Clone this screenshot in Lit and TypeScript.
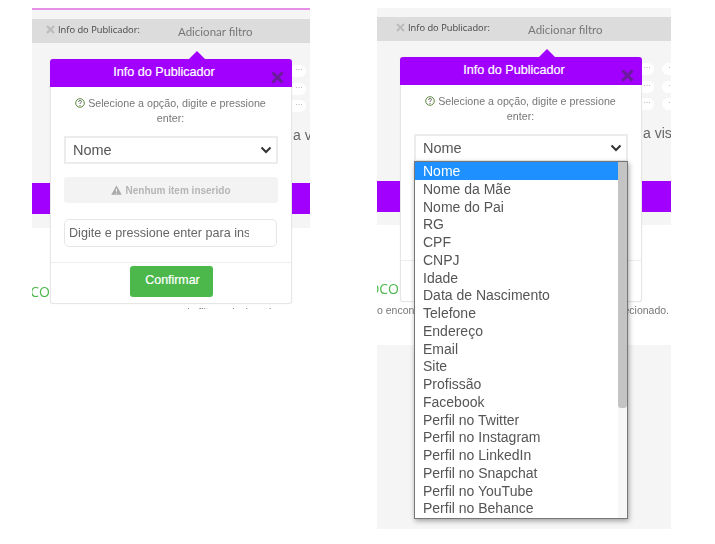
import { LitElement, html, css } from "lit";
import { customElement } from "lit/decorators.js";

const OPTIONS = ["Nome","Nome da Mãe","Nome do Pai","RG","CPF","CNPJ","Idade","Data de Nascimento","Telefone","Endereço","Email","Site","Profissão","Facebook","Perfil no Twitter","Perfil no Instagram","Perfil no LinkedIn","Perfil no Snapchat","Perfil no YouTube","Perfil no Behance"];

@customElement("app-root")
export class AppRoot extends LitElement {
  static styles = css`
    :host { display: block; width: 715px; height: 544px; background: #fff; overflow: hidden; font-family: "Liberation Sans", Arial, sans-serif; }
    .page { display: flex; align-items: flex-start; width: 715px; height: 544px; padding-left: 32px; box-sizing: border-box; gap: 67px; filter: blur(0.45px); }
    .panel { position: relative; display: flex; flex-direction: column; flex: none; overflow: hidden; margin-top: 8px; }
    .left { width: 278px; height: 301px; }
    .right { width: 294px; height: 521px; }
    .pink { height: 2px; background: #e58fe6; flex: none; }
    .gapTop { background: #f5f5f5; flex: none; height: 9px; }
    .bar { height: 24px; flex: none; background: #dcdcdc; display: flex; align-items: center; box-sizing: border-box; padding-left: 14px; color: #444; font: 9.3px "Open Sans", sans-serif; }
    .right .bar { padding-left: 19px; }
    .bar svg { flex: none; margin-right: 3px; margin-top: -4px; }
    .barLabel { width: 120px; flex: none; margin-top: -3px; white-space: nowrap; }
    .add { font: 11.5px Lato, sans-serif; color: #777; margin-top: 1px; white-space: nowrap; }
    .mid { background: #f5f5f5; height: 140px; flex: none; box-sizing: border-box; padding-top: 22px; display: flex; flex-direction: column; align-items: flex-start; }
    .pills { display: flex; flex-direction: column; gap: 5.5px; margin-left: 257px; }
    .right .pills { margin-left: 260px; }
    .pillRow { display: flex; gap: 8px; }
    .pill { width: 17px; height: 12px; border-radius: 6px; background: #fff; color: #aaa; font-size: 8px; line-height: 9px; text-align: right; padding-right: 3px; box-sizing: border-box; flex: none; }
    .vis { margin: 15px 0 0 261px; font-size: 14px; color: #666; white-space: nowrap; }
    .right .vis { margin-left: 266px; }
    .band { height: 31px; flex: none; background: #a100ff; }
    .under { height: 14px; flex: none; background: #f5f5f5; }
    .right .under { height: 13px; }
    .white { flex: none; background: #fff; box-sizing: border-box; padding-top: 55px; }
    .right .white { height: 120px; }
    .left .white { height: 80px; }
    .green { display: flex; justify-content: flex-end; overflow: hidden; width: 18px; color: #4cb84c; font: 14px/18px "Open Sans", sans-serif; white-space: nowrap; }
    .right .green { width: 22px; }
    .notFound { display: flex; justify-content: space-between; font-size: 10.5px; line-height: 12px; color: #777; white-space: nowrap; margin-top: 6px; padding-right: 2px; }
    .left .notFound { justify-content: flex-end; padding-right: 30px; margin-top: 5px; }
    .tail { flex: 1; background: #f5f5f5; }

    .pop { position: absolute; left: 18px; top: 51px; width: 242px; height: 245px; box-sizing: border-box; background: #fff; border: 1px solid #e6e6e6; border-top: none; border-radius: 3px; display: flex; flex-direction: column; align-items: center; box-shadow: 0 0 2px rgba(0,0,0,0.06); }
    .right .pop { left: 23px; top: 49px; }
    .arrow { position: absolute; left: 138px; top: -8px; width: 0; height: 0; border-left: 8px solid transparent; border-right: 8px solid transparent; border-bottom: 8px solid #a100ff; }
    .head { width: 242px; margin: 0 -1px; height: 28px; flex: none; box-sizing: border-box; padding-right: 14px; background: #a100ff; border-radius: 3px 3px 0 0; color: #fff; font: 12.6px/26px "Liberation Sans", sans-serif; -webkit-text-stroke: 0.2px #fff; text-align: center; position: relative; }
    .head svg { position: absolute; right: 8px; top: 12px; }
    .hint { margin-top: 9px; width: 214px; text-align: center; color: #777; font-size: 10.7px; line-height: 15px; height: 30px; flex: none; box-sizing: border-box; padding-right: 1px; }
    .hint svg { vertical-align: -1px; }
    .select { margin-top: 10px; width: 214px; height: 28px; flex: none; box-sizing: border-box; background: #fff; border: 2px solid #ececec; display: flex; align-items: center; justify-content: space-between; padding: 0 4px 0 7px; font-size: 14.5px; color: #555; }
    .warn { margin-top: 13px; width: 214px; height: 26px; flex: none; border-radius: 3px; background: #f3f3f3; color: #b5b5b5; font-weight: 700; font-size: 10px; display: flex; align-items: center; justify-content: center; gap: 3px; }
    input { margin: 16px 1px 0 0; width: 213px; height: 28px; flex: none; box-sizing: border-box; border: 1px solid #e6e6e6; border-radius: 5px; padding: 0 27px 0 4px; font: 12.6px "Liberation Sans", sans-serif; background: #fff; outline: none; }
    input::placeholder { color: #666; opacity: 1; }
    .foot { margin-top: 15px; width: 100%; border-top: 1px solid #eee; display: flex; justify-content: center; padding-top: 3px; }
    .btn { width: 83px; height: 31px; box-sizing: border-box; padding-left: 3px; border-radius: 3px; background: #4cb84c; color: #fff; font: 12.4px/28px "Liberation Sans", sans-serif; -webkit-text-stroke: 0.2px #fff; text-align: center; }

    .list { position: absolute; left: 37px; top: 153px; width: 214px; height: 358px; box-sizing: border-box; background: #fff; border: 1px solid #777; box-shadow: 1px 2px 5px rgba(0,0,0,0.35); display: flex; overflow: hidden; }
    .opts { flex: 1; display: flex; flex-direction: column; min-width: 0; }
    .opt { height: 17.75px; flex: none; line-height: 19px; padding-left: 8px; font-size: 14px; color: #555; white-space: nowrap; }
    .opt.sel { background: #1e90ff; color: #fff; }
    .track { width: 9px; flex: none; background: #f7f7f7; }
    .thumb { height: 246px; background: #c4c4c4; border-radius: 0 0 3px 3px; }
  `;

  private chevron() {
    return html`<svg width="12" height="8" viewBox="0 0 12 8"><path d="M1.5 1.5 6 6l4.5-4.5" fill="none" stroke="#333" stroke-width="2"/></svg>`;
  }

  private popover() {
    return html`<div class="pop">
      <div class="arrow"></div>
      <div class="head">Info do Publicador
        <svg width="13" height="13" viewBox="0 0 13 13"><path d="M1.5 1.5l10 10M11.5 1.5l-10 10" stroke="#6a1b9a" stroke-width="3"/></svg>
      </div>
      <div class="hint"><svg width="10" height="10" viewBox="0 0 10 10"><circle cx="5" cy="5" r="4.3" fill="none" stroke="#5d8a3a" stroke-width="1"/><path d="M3.6 4c0-2 2.8-2 2.8-.4C6.4 4.7 5 4.6 5 6" fill="none" stroke="#555" stroke-width="1"/><circle cx="5" cy="7.6" r=".6" fill="#555"/></svg> Selecione a opção, digite e pressione enter:</div>
      <div class="select"><span>Nome</span>${this.chevron()}</div>
      <div class="warn"><svg width="11" height="10" viewBox="0 0 12 11"><path d="M6 .5 11.8 10.8H.2z" fill="#aaa"/><path d="M6 4v3.5M6 8.4v1.2" stroke="#f3f3f3" stroke-width="1.2"/></svg>Nenhum item inserido</div>
      <input placeholder="Digite e pressione enter para inserir" />
      <div class="foot"><div class="btn">Confirmar</div></div>
    </div>`;
  }

  private pills(cols: number) {
    return html`<div class="pills">${[0, 1, 2].map(() => html`<div class="pillRow">${Array.from({ length: cols }, () => html`<div class="pill">···</div>`)}</div>`)}</div>`;
  }

  private bar() {
    return html`<div class="bar"><svg width="9" height="9" viewBox="0 0 9 9"><path d="M1 1l7 7M8 1 1 8" stroke="#bbb" stroke-width="2"/></svg><span class="barLabel">Info do Publicador:</span><span class="add">Adicionar filtro</span></div>`;
  }

  render() {
    return html`<div class="page">
      <section class="panel left">
        <div class="pink"></div>
        <div class="gapTop"></div>
        ${this.bar()}
        <div class="mid">${this.pills(1)}<div class="vis">a vi</div></div>
        <div class="band"></div>
        <div class="under"></div>
        <div class="white"><div class="green">OCO</div><div class="notFound"><span>do filtro selecionado.</span></div></div>
        ${this.popover()}
      </section>
      <section class="panel right">
        <div class="gapTop"></div>
        ${this.bar()}
        <div class="mid">${this.pills(2)}<div class="vis">a visa</div></div>
        <div class="band"></div>
        <div class="under"></div>
        <div class="white"><div class="green">OCO</div><div class="notFound"><span>o encontrado</span><span>selecionado.</span></div></div>
        <div class="tail"></div>
        ${this.popover()}
        <div class="list">
          <div class="opts">${OPTIONS.map((o, i) => html`<div class="opt ${i === 0 ? "sel" : ""}">${o}</div>`)}</div>
          <div class="track"><div class="thumb"></div></div>
        </div>
      </section>
    </div>`;
  }
}
